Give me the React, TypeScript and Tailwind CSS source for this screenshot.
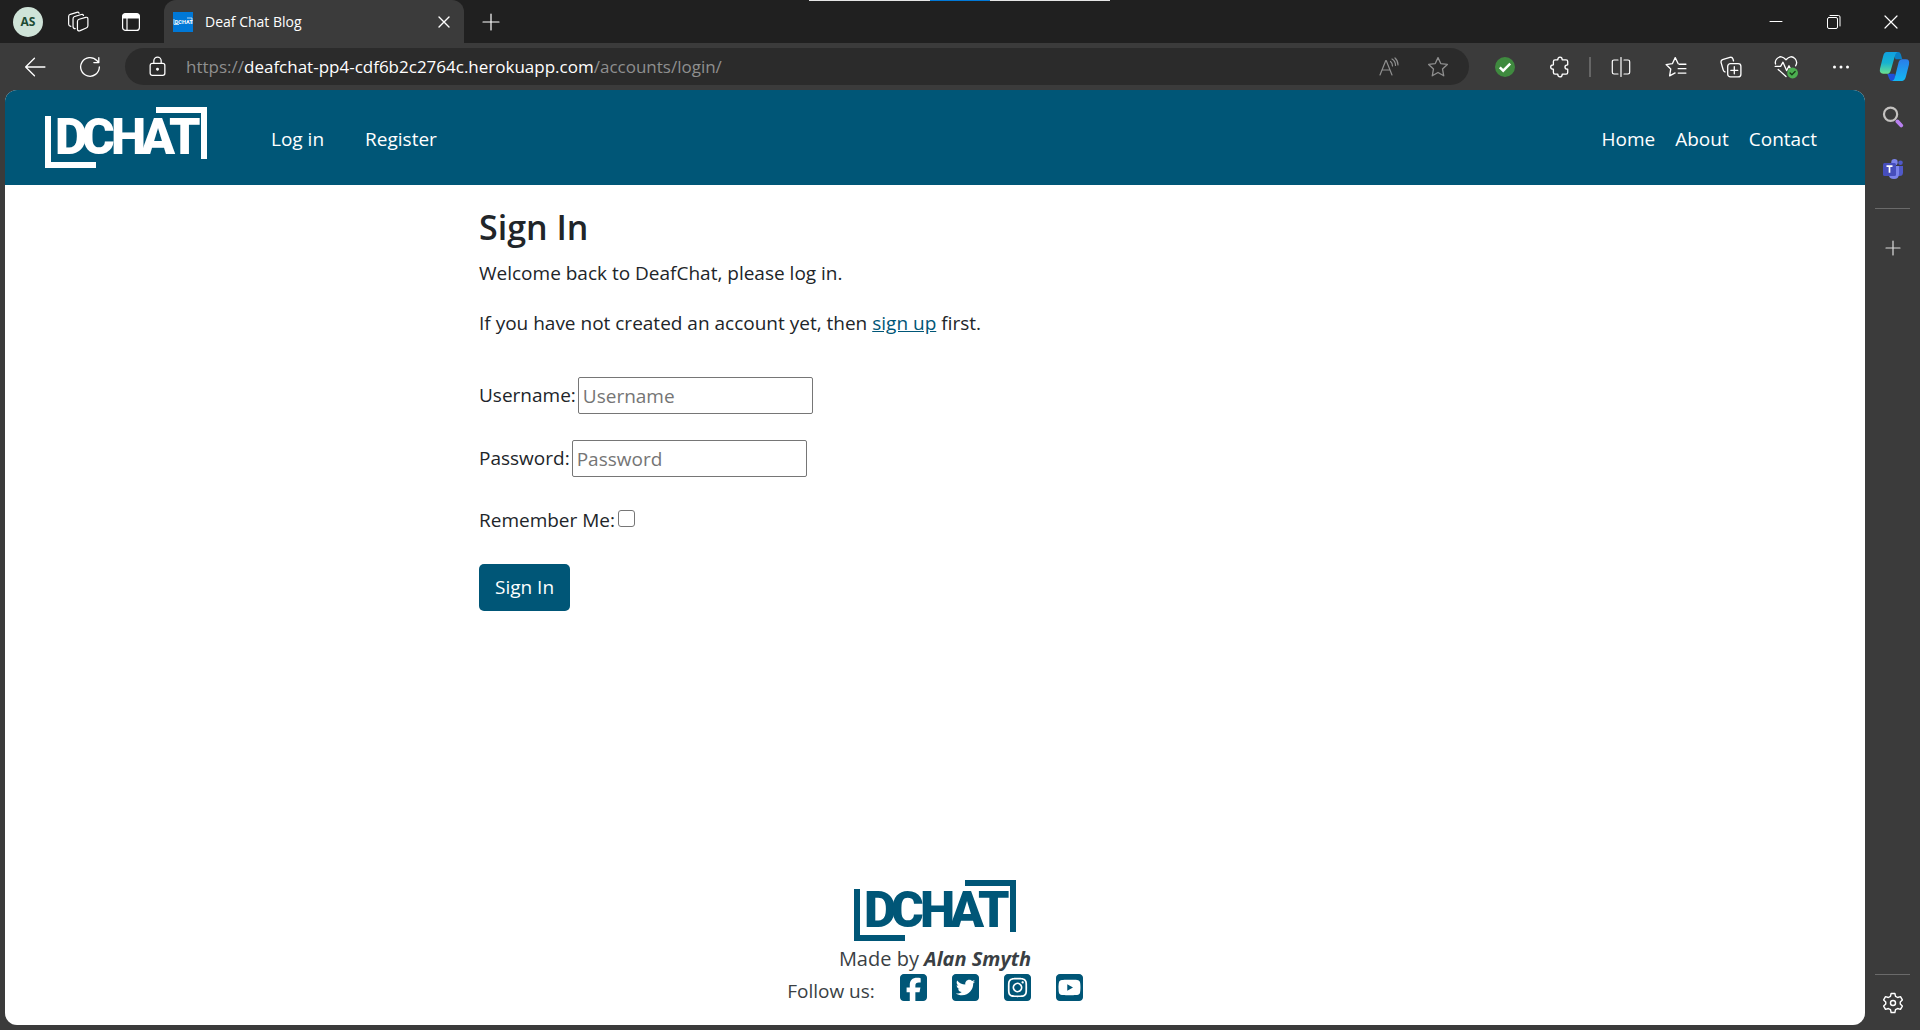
import type { ReactNode } from "react";
import {
  FaSquareFacebook,
  FaSquareInstagram,
  FaSquareTwitter,
  FaSquareYoutube,
} from "react-icons/fa6";

function Icon({ children, className = "size-5", stroke = 1.2 }: { children: ReactNode; className?: string; stroke?: number }) {
  return (
    <svg
      viewBox="0 0 20 20"
      className={className}
      fill="none"
      stroke="currentColor"
      strokeWidth={stroke}
      strokeLinecap="round"
      strokeLinejoin="round"
      aria-hidden="true"
    >
      {children}
    </svg>
  );
}

function ToolButton({ label, children, className = "w-[55px]" }: { label: string; children: ReactNode; className?: string }) {
  return (
    <button type="button" aria-label={label} className={`flex h-full shrink-0 items-center justify-center ${className}`}>
      {children}
    </button>
  );
}

function Logo({ className }: { className: string }) {
  return (
    <svg viewBox="0 0 162 61" className={className} fill="currentColor" role="img" aria-label="DCHAT">
      <path d="M111 0H162V52H156V6H111Z" />
      <path d="M0 9H6V55H51V61H0Z" />
      <text x="10 37 66 96 124" y="47" fontFamily="Roboto, sans-serif" fontWeight="900" fontSize="50">
        DCHAT
      </text>
    </svg>
  );
}

function TabStrip() {
  return (
    <header className="relative flex h-[43px] shrink-0 items-center bg-[#202020] text-white">
      <div className="absolute top-0 left-[809px] flex h-px w-[301px] bg-[#e5e5e5]">
        <div className="mx-auto h-px w-[60px] bg-[#0078d7]" />
      </div>
      <button
        type="button"
        className="ml-[13px] flex size-[30px] items-center justify-center rounded-full bg-[#cfe3d8] text-xs font-bold text-[#1d4a33]"
      >
        AS
      </button>
      <ToolButton label="Workspaces" className="ml-2 w-[53px]">
        <Icon className="size-[22px]" stroke={1.1}>
          <path d="m11 7.500 6-1.700q2-.5 2 1.500v6.200q0 1.500-1.500 2L12 17.800q-2.500.7-2.500-1.300v-7q0-1.500 1.500-2Z" />
          <path d="M7.500 16q-2 0-2-2V7q0-1.500 1.500-2l6-1.800q1.500-.4 2 .8" />
          <path d="M3.500 14q-2-.5-2-2V5Q1.500 3.500 3 3l6-1.800q1.500-.4 2 .8" />
        </Icon>
      </ToolButton>
      <ToolButton label="Tab actions" className="w-[53px]">
        <Icon>
          <path d="M2 6V4q0-2 2-2h12q2 0 2 2v2Z" fill="currentColor" />
          <rect x="1.600" y="1.600" width="16.800" height="16.800" rx="3" />
          <path d="M6 6v12" />
        </Icon>
      </ToolButton>
      <div className="ml-[7px] flex h-full w-[300px] items-center rounded-t-xl bg-[#3b3b3b] pr-2 pl-[9px]">
        <svg viewBox="0 0 20 20" className="size-5" aria-hidden="true">
          <path d="M0 0h20v20H0z" fill="#0078d7" />
          <path d="M1 7v5.500h5M14 6h5v6" fill="none" stroke="#fff" strokeWidth=".7" />
          <text x="1.800" y="11.800" fontFamily="Roboto, sans-serif" fontWeight="700" fontSize="5.500" fill="#fff">DCHAT</text>
        </svg>
        <span className="ml-3 flex-1 text-sm">Deaf Chat Blog</span>
        <button type="button" aria-label="Close tab" className="flex size-6 items-center justify-center">
          <Icon stroke={1.4}>
            <path d="m5 5 10 10M15 5 5 15" />
          </Icon>
        </button>
      </div>
      <ToolButton label="New tab" className="w-[53px]">
        <Icon>
          <path d="M10 2v16M2 10h16" />
        </Icon>
      </ToolButton>
      <div className="ml-auto flex h-full">
        <ToolButton label="Minimize" className="w-[58px]">
          <Icon stroke={1}>
            <path d="M4 9.500h12" />
          </Icon>
        </ToolButton>
        <ToolButton label="Restore" className="w-[57px]">
          <Icon stroke={1}>
            <rect x="3.500" y="5.500" width="10" height="11" rx="1.500" />
            <path d="M6 3.500h8.500q1.500 0 1.500 1.500v9" />
          </Icon>
        </ToolButton>
        <ToolButton label="Close" className="w-[58px]">
          <Icon>
            <path d="m4 4 12 12M16 4 4 16" />
          </Icon>
        </ToolButton>
      </div>
    </header>
  );
}

function Toolbar() {
  return (
    <div className="flex h-[47px] shrink-0 items-center text-white">
      <ToolButton label="Back" className="ml-[7px] w-[55px]">
        <Icon className="size-[22px]">
          <path d="M19 10H1.500M9.500 2 1.500 10l8 8" />
        </Icon>
      </ToolButton>
      <ToolButton label="Refresh">
        <Icon className="size-[22px]">
          <path d="M18.500 10a8.500 8.500 0 1 1-2.300-5.900L18 6M18 1.500V6h-4.500" />
        </Icon>
      </ToolButton>
      <div className="ml-2 flex h-[37px] flex-1 items-center rounded-full bg-[#2b2b2b]">
        <ToolButton label="Site information" className="ml-1 w-[57px]">
          <Icon className="size-[21px]">
            <rect x="3" y="7" width="14" height="11.500" rx="2" />
            <path d="M6.500 7V4.500a3.500 3.500 0 0 1 7 0V7" />
            <circle cx="10" cy="12.700" r=".8" fill="currentColor" />
          </Icon>
        </ToolButton>
        <div className="flex-1 whitespace-nowrap text-[17px] text-[#8f8f8f]">
          https://<span className="text-white">deafchat-pp4-cdf6b2c2764c.herokuapp.com</span>/accounts/login/
        </div>
        <ToolButton label="Read aloud" className="w-[49px] text-[#8f8f8f]">
          <Icon stroke={1.200}>
            <path d="M1 18 6.800 3.500h.4L13 18M3 13h8M11.500 4.500q2 1.500 2 4.500M13 2q3.500 2 3.500 6.500M16 1q3 2.500 3 7" />
          </Icon>
        </ToolButton>
        <ToolButton label="Add to favorites" className="mr-[7px] w-[49px] text-[#8f8f8f]">
          <Icon className="size-[22px]">
            <path d="m10 1.500 2.500 5.400 6 .8-4.400 4.100 1.100 6.200-5.200-3-5.200 3 1.100-6.200L1.500 7.700l6-.8Z" />
          </Icon>
        </ToolButton>
      </div>
      <ToolButton label="Extension status" className="ml-2 w-[55px]">
        <svg viewBox="0 0 20 20" className="size-5" aria-hidden="true">
          <circle cx="10" cy="10" r="10" fill="#3f8a3f" />
          <path d="m4.800 10.300 3.400 3.400 7-7" fill="none" stroke="#fff" strokeWidth="2.500" />
        </svg>
      </ToolButton>
      <ToolButton label="Extensions">
        <Icon className="size-[22px]">
          <path d="M5.500 3.500H8q0-2.500 2-2.500t2 2.500h3.500q1.500 0 1.500 1.500v3q-2.500 0-2.500 2t2.500 2v3q0 1.500-1.500 1.500H12q0 2.500-2 2.500t-2-2.500H5.500Q4 16.500 4 15v-3q-2.500 0-2.500-2T4 8V5q0-1.500 1.500-1.500Z" />
        </Icon>
      </ToolButton>
      <div className="mx-[2px] h-5 w-[2px] bg-[#666]" />
      <ToolButton label="Split screen">
        <Icon>
          <path d="M7 3H3Q1.300 3 1.300 4.700v10.600Q1.300 17 3 17h4M13 3h4q1.700 0 1.700 1.700v10.600q0 1.700-1.700 1.700h-4M10 .5v19" />
        </Icon>
      </ToolButton>
      <ToolButton label="Favorites">
        <Icon className="size-[22px]">
          <path d="M12 7 9.300 1.500 6.700 7 1 7.800l4.200 4.100-1 6.100 5-2.600M13 7.500h6M12 11.500h7M12 15.500h7" />
        </Icon>
      </ToolButton>
      <ToolButton label="Collections">
        <Icon className="size-[22px]">
          <rect x="7" y="7" width="12" height="12" rx="2.500" />
          <path d="M13 9.800v6.400M9.800 13h6.400M4.500 14.500Q3.200 14 2.800 12.300L1 6Q.6 4 2.300 3.300L9 1.300q2-.6 2.800 1.400L12.300 4.500" />
        </Icon>
      </ToolButton>
      <ToolButton label="Browser essentials">
        <Icon className="size-[24px]" stroke={1.100}>
          <path d="M1.300 7.500Q.5 5 2.500 3 6-.5 10 4q4-4.500 7.500-1Q20 6 18 9M3.500 12 10 18M1 9.500h4.500L7.500 6l3 7 2-4 1 2" />
          <circle cx="15.500" cy="15" r="4.500" fill="#4caf50" stroke="none" />
          <path d="m13.400 15 1.500 1.500 2.700-2.800" stroke="#173d19" />
        </Icon>
      </ToolButton>
      <ToolButton label="Settings and more">
        <svg viewBox="0 0 20 20" className="size-5" fill="currentColor" aria-hidden="true">
          <circle cx="3.500" cy="10" r="1.500" />
          <circle cx="10" cy="10" r="1.500" />
          <circle cx="16.500" cy="10" r="1.500" />
        </svg>
      </ToolButton>
      <ToolButton label="Copilot" className="w-[52px]">
        <svg viewBox="0 0 30 30" className="size-[31px]" aria-hidden="true">
          <defs>
            <linearGradient id="cpLeft" x1="0" y1="0" x2="0" y2="1">
              <stop offset="0" stopColor="#10a0e0" />
              <stop offset=".5" stopColor="#17b3d0" />
              <stop offset="1" stopColor="#6be08f" />
            </linearGradient>
            <linearGradient id="cpRight" x1="0" y1="0" x2="0" y2="1">
              <stop offset="0" stopColor="#2b7de9" />
              <stop offset="1" stopColor="#12b8f2" />
            </linearGradient>
          </defs>
          <path d="M13 1h5.500q2 0 2.700 2.300L22.500 8H16Z" fill="#0b7fc4" />
          <path d="M8 22h7l1.500 7H13q-2.500 0-3.200-2.500Z" fill="#1e4fd8" />
          <path d="M7.500 1H18q-1.600.6-2.200 2.500L11.300 19q-.8 3-3.600 3H4Q0 22 1 17L4 5q1-4 3.500-4Z" fill="url(#cpLeft)" />
          <path d="M22.500 29H12.800q1.600-.6 2.300-2.700L19 11q.9-3 3.500-3H26q4 0 3 5l-3 12q-1 4-3.500 4Z" fill="url(#cpRight)" />
        </svg>
      </ToolButton>
    </div>
  );
}

function Sidebar() {
  return (
    <aside className="flex w-[55px] shrink-0 flex-col items-center text-[#dcdcdc]">
      <button type="button" aria-label="Search" className="flex h-[53px] items-center justify-center">
        <svg viewBox="0 0 20 20" className="size-[22px]" fill="none" aria-hidden="true">
          <circle cx="7.800" cy="7.500" r="6" stroke="#c4c2c0" strokeWidth="2" />
          <path d="m14 14 3.500 3.700" stroke="#b980f0" strokeWidth="3.400" strokeLinecap="round" />
        </svg>
      </button>
      <button type="button" aria-label="Microsoft Teams" className="flex h-[51px] items-center justify-center">
        <svg viewBox="0 0 20 20" className="size-5" aria-hidden="true">
          <circle cx="11.500" cy="3.200" r="3.200" fill="#7b83eb" />
          <circle cx="17.500" cy="3.800" r="2.300" fill="#5059c9" />
          <path d="M14 7h6v6.500q0 3.500-3.500 3.500H14Z" fill="#5059c9" />
          <path d="M6 7h10v7.500Q16 20 11 20t-5-4Z" fill="#7b83eb" />
          <rect y="4" width="13" height="13" rx="1.500" fill="#464ebc" />
          <path d="M3.500 7.200h6M6.500 7.200v6.600" stroke="#fff" strokeWidth="1.700" />
        </svg>
      </button>
      <div className="mt-[14px] h-px w-[35px] bg-[#6a6a6a]" />
      <button type="button" aria-label="Customize" className="mt-[29px] flex items-center justify-center">
        <Icon>
          <path d="M10 3v14M3 10h14" />
        </Icon>
      </button>
      <div className="mt-auto h-px w-[35px] bg-[#6a6a6a]" />
      <button type="button" aria-label="Sidebar settings" className="flex h-[55px] items-center justify-center text-white">
        <Icon className="size-[22px]" stroke={1.300}>
          <path d="M8.300 1.300h3.400l.6 2.600 1.900 1.100 2.600-.8 1.700 3-1.900 1.800v2l1.900 1.800-1.700 3-2.600-.8-1.900 1.100-.6 2.600H8.300l-.6-2.600L5.800 15l-2.600.8-1.700-3L3.400 11V9L1.500 7.200l1.700-3 2.600.8 1.900-1.100Z" />
          <circle cx="10" cy="10" r="2.300" />
        </Icon>
      </button>
    </aside>
  );
}

function NavBar() {
  return (
    <nav className="flex h-[95px] shrink-0 items-center bg-[#005677] pr-12 pl-10 text-white">
      <a href="#home">
        <Logo className="w-[162px]" />
      </a>
      <a href="#login" className="ml-16 pt-1">Log in</a>
      <a href="#register" className="ml-[41px] pt-1">Register</a>
      <div className="ml-auto flex gap-5 pt-1">
        <a href="#home">Home</a>
        <a href="#about">About</a>
        <a href="#contact">Contact</a>
      </div>
    </nav>
  );
}

function Field({ id, label, type }: { id: string; label: string; type: string }) {
  return (
    <div className="flex h-[37px] items-center gap-[2px]">
      <label htmlFor={id}>{label}:</label>
      <input
        id={id}
        type={type}
        placeholder={label}
        className="h-full w-[235px] rounded-[2px] border border-[#767676] px-1 placeholder:text-[#757575]"
      />
    </div>
  );
}

function SignIn() {
  return (
    <main className="ml-[25%] flex flex-col items-start pt-5 pl-[9px]">
      <h1 className="text-[34px] leading-[45px] font-semibold">Sign In</h1>
      <p className="mt-2 leading-[30px]">Welcome back to DeafChat, please log in.</p>
      <p className="mt-5 leading-[30px]">
        If you have not created an account yet, then{" "}
        <a href="#signup" className="text-[#005677] underline">sign up</a> first.
      </p>
      <form className="mt-[39px] flex flex-col items-start" onSubmit={(e) => e.preventDefault()}>
        <div className="flex flex-col gap-[26px]">
          <Field id="username" label="Username" type="text" />
          <Field id="password" label="Password" type="password" />
        </div>
        <div className="mt-7 flex h-[30px] items-center gap-[3px]">
          <label htmlFor="remember">Remember Me:</label>
          <input
            id="remember"
            type="checkbox"
            className="mb-1 size-[17px] appearance-none rounded-[3px] border border-[#767676] bg-white checked:bg-[#005677]"
          />
        </div>
        <button type="submit" className="mt-[29px] h-[47px] rounded-[5px] bg-[#005677] px-4 text-white">
          Sign In
        </button>
      </form>
    </main>
  );
}

function Footer() {
  return (
    <footer className="mt-auto flex flex-col items-center pb-6 text-[#005677]">
      <Logo className="w-[162px]" />
      <p className="mt-1 text-xl leading-7 text-[#3a3f44]">
        Made by <em className="font-bold">Alan Smyth</em>
      </p>
      <div className="flex h-7 items-center gap-[25px]">
        <span className="pt-2 leading-7 text-[#3a3f44]">Follow us:</span>
        <a href="#facebook" aria-label="Facebook"><FaSquareFacebook className="h-[31px] w-[27px]" /></a>
        <a href="#twitter" aria-label="Twitter"><FaSquareTwitter className="h-[31px] w-[27px]" /></a>
        <a href="#instagram" aria-label="Instagram"><FaSquareInstagram className="h-[31px] w-[27px]" /></a>
        <a href="#youtube" aria-label="YouTube"><FaSquareYoutube className="h-[31px] w-[27px]" /></a>
      </div>
    </footer>
  );
}

export default function App() {
  return (
    <div className="flex h-screen flex-col overflow-hidden bg-[#3b3b3b] font-['Open_Sans',sans-serif]">
      <TabStrip />
      <Toolbar />
      <div className="flex min-h-0 flex-1">
        <div className="mb-[5px] ml-[5px] flex flex-1 flex-col overflow-auto rounded-xl bg-white text-[19px] text-[#212529]">
          <NavBar />
          <SignIn />
          <Footer />
        </div>
        <Sidebar />
      </div>
    </div>
  );
}
